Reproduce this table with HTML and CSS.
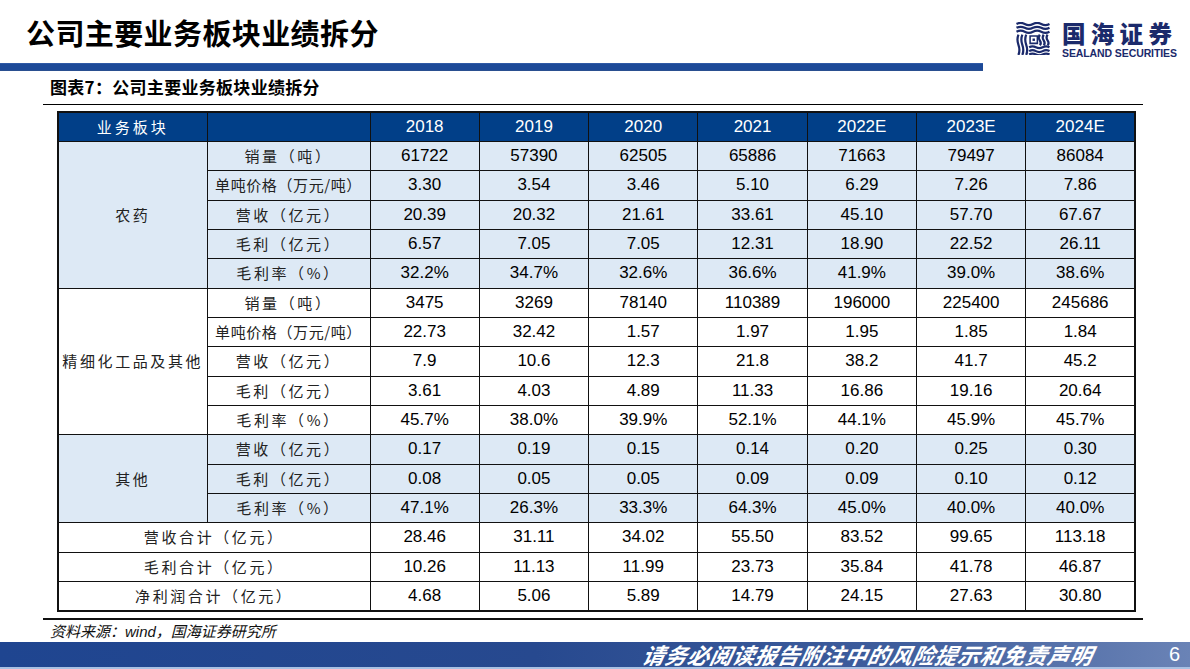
FILE: index.html
```html
<!DOCTYPE html>
<html lang="zh-CN">
<head>
<meta charset="utf-8">
<title>公司主要业务板块业绩拆分</title>
<link rel="stylesheet" href="styles.css">
</head>
<body>
<div class="page">
  <header class="top">
    <div class="top-left">
      <h1 class="title">公司主要业务板块业绩拆分</h1>
      <div class="bar"></div>
    </div>
    <div class="logo">
      <svg class="logo-icon" viewBox="0 0 34 34" width="34" height="33">
        <g fill="none" stroke="#1b2a6b" stroke-width="2.3" stroke-linecap="butt">
          <path d="M0 2 q4.25 -2.2 8.5 0 t8.5 0 t8.5 0 t8.5 0"/>
          <path d="M0 6 q4.25 -2.2 8.5 0 t8.5 0 t8.5 0 t8.5 0"/>
          <path d="M0 10 q4.25 -2.2 8.5 0 t8.5 0 t8.5 0 t8.5 0"/>
          <path d="M2 13 q-2 5 0 10.5 t0 10.5"/>
          <path d="M6 13 q-2 5 0 10.5 t0 10.5"/>
          <path d="M10 13 q-2 5 0 10.5 t0 10.5"/>
          <path d="M24 13 q-2 3 0 6 t0 5"/>
          <path d="M28 13 q-2 3 0 6 t0 5"/>
          <path d="M32 13 q-2 3 0 6 t0 5"/>
          <path d="M13 26 q3.5 -2 7 0 t7 0 t7 0"/>
          <path d="M13 30 q3.5 -2 7 0 t7 0 t7 0"/>
          <path d="M13 33.5 q3.5 -2 7 0 t7 0 t7 0"/>
          <path d="M14 14.5 h7.5 v7.5 h-7.5 z" stroke-width="1.6"/>
        </g>
        <rect x="16.5" y="17" width="2.5" height="2.5" fill="#1b2a6b"/>
      </svg>
      <div class="logo-text">
        <div class="logo-cn">国海证券</div>
        <div class="logo-en">SEALAND SECURITIES</div>
      </div>
    </div>
  </header>

  <div class="caption"><span>图表7：公司主要业务板块业绩拆分</span></div>

  <table class="data">
    <colgroup>
      <col class="c-seg"><col class="c-item">
      <col class="c-y"><col class="c-y"><col class="c-y"><col class="c-y"><col class="c-y"><col class="c-y"><col class="c-y">
    </colgroup>
    <thead>
      <tr>
        <th class="cn">业务板块</th><th></th>
        <th>2018</th><th>2019</th><th>2020</th><th>2021</th><th>2022E</th><th>2023E</th><th>2024E</th>
      </tr>
    </thead>
    <tbody class="blue">
      <tr><td class="seg" rowspan="5">农药</td><td class="lbl">销量（吨）</td><td>61722</td><td>57390</td><td>62505</td><td>65886</td><td>71663</td><td>79497</td><td>86084</td></tr>
      <tr><td class="lbl tight">单吨价格（万元/吨）</td><td>3.30</td><td>3.54</td><td>3.46</td><td>5.10</td><td>6.29</td><td>7.26</td><td>7.86</td></tr>
      <tr><td class="lbl">营收（亿元）</td><td>20.39</td><td>20.32</td><td>21.61</td><td>33.61</td><td>45.10</td><td>57.70</td><td>67.67</td></tr>
      <tr><td class="lbl">毛利（亿元）</td><td>6.57</td><td>7.05</td><td>7.05</td><td>12.31</td><td>18.90</td><td>22.52</td><td>26.11</td></tr>
      <tr><td class="lbl">毛利率（%）</td><td>32.2%</td><td>34.7%</td><td>32.6%</td><td>36.6%</td><td>41.9%</td><td>39.0%</td><td>38.6%</td></tr>
    </tbody>
    <tbody class="white">
      <tr><td class="seg" rowspan="5">精细化工品及其他</td><td class="lbl">销量（吨）</td><td>3475</td><td>3269</td><td>78140</td><td>110389</td><td>196000</td><td>225400</td><td>245686</td></tr>
      <tr><td class="lbl tight">单吨价格（万元/吨）</td><td>22.73</td><td>32.42</td><td>1.57</td><td>1.97</td><td>1.95</td><td>1.85</td><td>1.84</td></tr>
      <tr><td class="lbl">营收（亿元）</td><td>7.9</td><td>10.6</td><td>12.3</td><td>21.8</td><td>38.2</td><td>41.7</td><td>45.2</td></tr>
      <tr><td class="lbl">毛利（亿元）</td><td>3.61</td><td>4.03</td><td>4.89</td><td>11.33</td><td>16.86</td><td>19.16</td><td>20.64</td></tr>
      <tr><td class="lbl">毛利率（%）</td><td>45.7%</td><td>38.0%</td><td>39.9%</td><td>52.1%</td><td>44.1%</td><td>45.9%</td><td>45.7%</td></tr>
    </tbody>
    <tbody class="blue">
      <tr><td class="seg" rowspan="3">其他</td><td class="lbl">营收（亿元）</td><td>0.17</td><td>0.19</td><td>0.15</td><td>0.14</td><td>0.20</td><td>0.25</td><td>0.30</td></tr>
      <tr><td class="lbl">毛利（亿元）</td><td>0.08</td><td>0.05</td><td>0.05</td><td>0.09</td><td>0.09</td><td>0.10</td><td>0.12</td></tr>
      <tr><td class="lbl">毛利率（%）</td><td>47.1%</td><td>26.3%</td><td>33.3%</td><td>64.3%</td><td>45.0%</td><td>40.0%</td><td>40.0%</td></tr>
    </tbody>
    <tbody class="white">
      <tr><td class="lbl" colspan="2">营收合计（亿元）</td><td>28.46</td><td>31.11</td><td>34.02</td><td>55.50</td><td>83.52</td><td>99.65</td><td>113.18</td></tr>
      <tr><td class="lbl" colspan="2">毛利合计（亿元）</td><td>10.26</td><td>11.13</td><td>11.99</td><td>23.73</td><td>35.84</td><td>41.78</td><td>46.87</td></tr>
      <tr><td class="lbl" colspan="2">净利润合计（亿元）</td><td>4.68</td><td>5.06</td><td>5.89</td><td>14.79</td><td>24.15</td><td>27.63</td><td>30.80</td></tr>
    </tbody>
  </table>

  <div class="source">资料来源：wind，国海证券研究所</div>

  <footer class="foot">
    <span class="notice">请务必阅读报告附注中的风险提示和免责声明</span>
    <span class="pageno">6</span>
  </footer>
</div>
</body>
</html>
```

FILE: styles.css
```css
* { box-sizing: border-box; margin: 0; padding: 0; }

html, body {
  width: 1190px;
  height: 669px;
  background: #ffffff;
  overflow: hidden;
}

body {
  font-family: "Liberation Sans", "Noto Sans CJK SC", sans-serif;
  color: #000;
}

.page {
  width: 1190px;
  height: 669px;
  display: flex;
  flex-direction: column;
}

/* ---------- header ---------- */
.top {
  display: flex;
  align-items: flex-start;
  height: 71px;
}

.top-left {
  width: 983px;
  height: 71px;
  display: flex;
  flex-direction: column;
}

.title {
  font-family: "Noto Sans CJK SC", sans-serif;
  font-weight: 700;
  font-size: 29px;
  line-height: 34px;
  letter-spacing: 0.4px;
  padding: 15px 0 0 26px;
  height: 63px;
  color: #000;
}

.bar {
  height: 8px;
  background: #1d4a98;
  border-top: 1px solid #2f5aa6;
  border-bottom: 1px solid #2a4f90;
}

.logo {
  margin-left: 33px;
  margin-top: 22px;
  display: flex;
  align-items: flex-start;
  gap: 12px;
}

.logo-icon { display: block; }

.logo-text {
  display: flex;
  flex-direction: column;
  color: #1b2a6b;
  margin-top: -1px;
}

.logo-cn {
  font-family: "Noto Sans CJK SC", sans-serif;
  font-weight: 900;
  font-size: 23.5px;
  line-height: 24px;
  height: 24px;
  letter-spacing: 5.3px;
}

.logo-en {
  font-family: "Liberation Sans", sans-serif;
  font-weight: 700;
  font-size: 10.5px;
  line-height: 11px;
  margin-top: 3px;
  letter-spacing: -0.1px;
}

/* ---------- caption ---------- */
.caption {
  margin-left: 43px;
  width: 1100px;
  height: 34px;
  border-bottom: 1px solid #000;
  padding: 5px 0 0 7px;
}

.caption span {
  font-family: "Noto Sans CJK SC", sans-serif;
  font-weight: 700;
  font-size: 17px;
  line-height: 22px;
  letter-spacing: 0.3px;
}

/* ---------- table ---------- */
.data {
  margin-left: 57px;
  margin-top: 6px;
  width: 1077px;
  border-collapse: collapse;
  table-layout: fixed;
  border: 2px solid #111;
}

.c-seg { width: 149px; }
.c-item { width: 163px; }
.c-y { width: 109.3px; }

.data th,
.data td {
  border: 1px solid #111;
  height: 29.35px;
  padding: 0;
  text-align: center;
  vertical-align: middle;
  font-family: "Liberation Sans", sans-serif;
  font-size: 17px;
  line-height: 20px;
  white-space: nowrap;
  overflow: hidden;
}

.data thead th {
  background: #013f88;
  color: #fff;
  font-weight: 400;
}

.data thead th.cn {
  font-family: "Noto Sans CJK SC", sans-serif;
  font-size: 15px;
  letter-spacing: 3px;
}

.blue td { background: #dde9f5; }
.white td { background: #ffffff; }

.data td.lbl,
.data td.seg {
  font-family: "Noto Sans CJK SC", sans-serif;
  font-size: 15px;
  letter-spacing: 2.6px;
  color: #222;
}

.data td.lbl.tight {
  letter-spacing: 0.6px;
}

/* ---------- source ---------- */
.source {
  margin-left: 43px;
  margin-top: 6px;
  width: 1100px;
  border-top: 2px solid #111;
  padding: 3px 0 0 7px;
  font-family: "Liberation Sans", "Noto Sans CJK SC", sans-serif;
  font-style: italic;
  font-size: 15px;
  line-height: 18px;
  color: #111;
}

/* ---------- footer ---------- */
.foot {
  margin-top: auto;
  height: 27px;
  background: linear-gradient(to right, #1f4590 0%, #27498f 45%, #3e5d9c 75%, #6a83b6 100%);
  border-bottom: 2px solid #a9c1e3;
  display: flex;
  align-items: center;
  justify-content: flex-end;
  color: #fff;
}

.notice {
  font-family: "Noto Sans CJK SC", sans-serif;
  font-weight: 700;
  font-style: italic;
  font-size: 22px;
  line-height: 25px;
  letter-spacing: 0.5px;
  transform: skewX(-12deg);
  margin-right: 76px;
}

.pageno {
  font-family: "Liberation Sans", sans-serif;
  font-size: 20px;
  line-height: 25px;
  margin-right: 10px;
}
```
